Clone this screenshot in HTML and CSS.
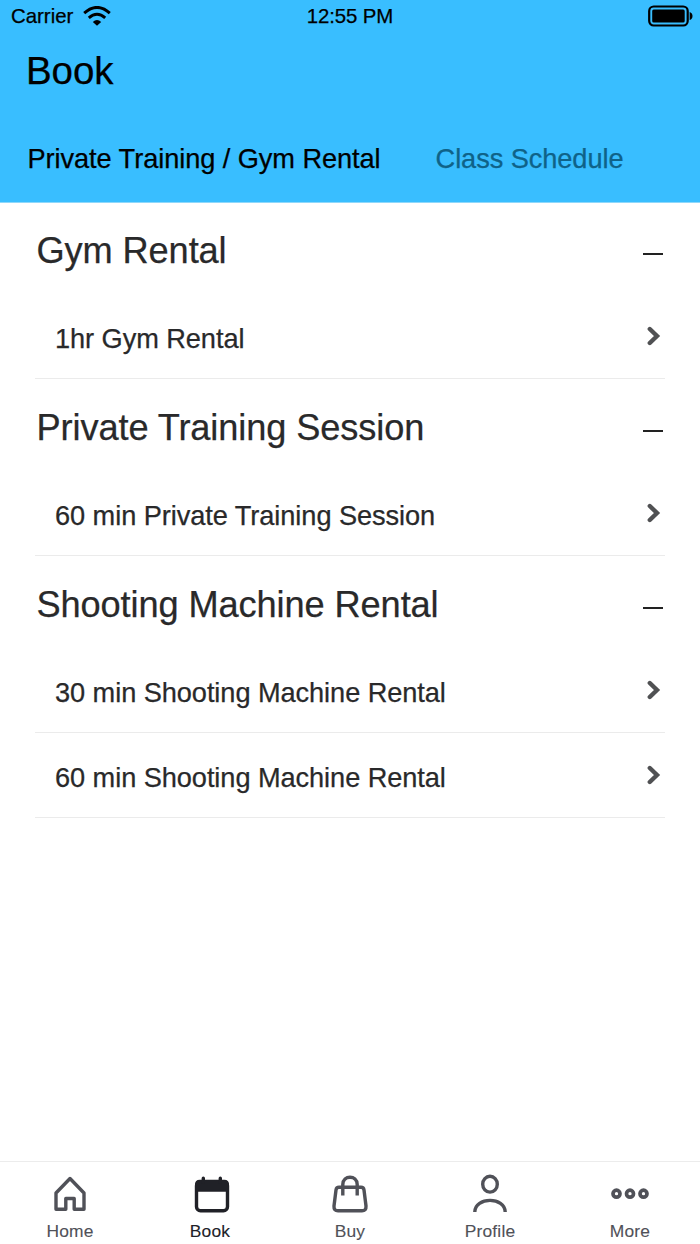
FILE: index.html
```html
<!DOCTYPE html>
<html lang="en">
<head>
<meta charset="utf-8">
<title>Book</title>
<link rel="stylesheet" href="styles.css">
</head>
<body>
<div class="app">
  <header class="header">
    <div class="status">
      <div class="carrier"><span>Carrier</span>
        <svg class="wifi" width="28" height="20" viewBox="0 0 28 20" fill="none" stroke="#000" stroke-width="3"><path d="M1.2 7.1Q14-4.2 26.8 7.1"/><path d="M5.8 11.8Q14 4.7 22.2 11.8"/><path d="M9.8 16Q14 12 18.2 16L14 19.8Z" fill="#000" stroke="none"/></svg>
      </div>
      <span class="time">12:55 PM</span>
      <svg class="battery" width="46" height="22" viewBox="0 0 46 22"><rect x="2.2" y="1.5" width="38.5" height="19" rx="4.5" fill="none" stroke="#000" stroke-width="2.2"/><rect x="5.2" y="4.5" width="32.5" height="13" rx="1.5"/><path d="M42.7 7Q45.5 8 45.5 11T42.7 15Z"/></svg>
    </div>
    <h1 class="title">Book</h1>
    <nav class="tabs"><a class="tab active">Private Training / Gym Rental</a><a class="tab">Class Schedule</a></nav>
  </header>
  <main class="content">
    <section>
      <h2 class="group"><span>Gym Rental</span><i class="minus"></i></h2>
      <div class="row"><span>1hr Gym Rental</span><svg class="chevron" viewBox="0 0 14 20"><path d="M2.8 3 10 10 2.8 17"/></svg></div>
    </section>
    <section>
      <h2 class="group"><span>Private Training Session</span><i class="minus"></i></h2>
      <div class="row"><span>60 min Private Training Session</span><svg class="chevron" viewBox="0 0 14 20"><path d="M2.8 3 10 10 2.8 17"/></svg></div>
    </section>
    <section>
      <h2 class="group"><span>Shooting Machine Rental</span><i class="minus"></i></h2>
      <div class="row"><span>30 min Shooting Machine Rental</span><svg class="chevron" viewBox="0 0 14 20"><path d="M2.8 3 10 10 2.8 17"/></svg></div>
      <div class="row"><span>60 min Shooting Machine Rental</span><svg class="chevron" viewBox="0 0 14 20"><path d="M2.8 3 10 10 2.8 17"/></svg></div>
    </section>
  </main>
  <footer class="tabbar">
    <a class="item"><svg class="icon" viewBox="0 0 44 44"><path d="M22 6.5 36 21V37.3H26.2V26.5H17.8V37.3H8V21Z"/></svg><span>Home</span></a>
    <a class="item selected"><svg class="icon" viewBox="0 0 44 44"><rect x="8.5" y="9.8" width="31" height="29" rx="4"/><path class="solid" d="M7 19.800V12.500Q7 7.800 11.7 7.800H36.3Q41 7.800 41 12.500V19.800Z"/><path d="M15.3 6.2V10M32.3 6.2V10" stroke-linecap="round"/></svg><span>Book</span></a>
    <a class="item"><svg class="icon" viewBox="0 0 44 44"><path d="M11 15.3H33Q35.6 15.3 36 18L38 34Q38.3 38.7 34 38.7H10Q5.7 38.7 6 34L8 18Q8.400 15.3 11 15.3Z"/><path d="M14.8 23.5V12.5C14.8 2.8 29.2 2.8 29.2 12.5V23.5"/></svg><span>Buy</span></a>
    <a class="item"><svg class="icon" viewBox="0 0 44 44"><ellipse cx="22" cy="12.2" rx="7.3" ry="7.900"/><path d="M6.800 40C6.800 24.500 37.200 24.500 37.200 40"/></svg><span>Profile</span></a>
    <a class="item"><svg class="icon" viewBox="0 0 44 44"><g stroke-width="3.7"><circle cx="8.5" cy="21.7" r="3.5"/><circle cx="22" cy="21.7" r="3.5"/><circle cx="35.5" cy="21.7" r="3.5"/></g></svg><span>More</span></a>
  </footer>
</div>
</body>
</html>
```
FILE: styles.css
```css
* { box-sizing: border-box; }
body { margin: 0; background: #fff; font-family: "Liberation Sans", Arial, sans-serif; -webkit-text-stroke: .25px currentColor; }
.app { width: 700px; height: 1244px; display: flex; flex-direction: column; }
.header { height: 203px; background: #39beff; color: #000; border-bottom: 1px solid #8fd8fb; }
.status { height: 32px; padding: 0 7px 0 11px; display: grid; grid-template-columns: 1fr auto 1fr; align-items: center; font-size: 20.4px; line-height: 32px; }
.carrier { display: flex; align-items: center; gap: 10px; }
.time { margin-left: -4px; letter-spacing: -.1px; }
.battery { justify-self: end; }
.title { margin: 16px 0 0 26px; font-size: 38.5px; line-height: 46px; font-weight: 400; letter-spacing: -.1px; }
.tabs { display: flex; gap: 55px; margin: 49px 0 0 27.5px; font-size: 27.2px; line-height: 32px; letter-spacing: -.07px; white-space: nowrap; }
.tab { color: #0f6288; }
.tab.active { color: #000; }
.content { flex: 1; padding: 0 35px; color: #29292a; }
.group { height: 91px; margin: 0; padding: 4px 2px 0 1.5px; display: flex; align-items: center; justify-content: space-between; font-size: 36.2px; font-weight: 400; letter-spacing: -.1px; }
.minus { width: 20px; height: 2px; margin-top: 6px; background: #222; }
.row { height: 85px; padding: 6px 4px 0 20px; display: flex; align-items: center; justify-content: space-between; font-size: 27.2px; letter-spacing: -.07px; border-bottom: 1px solid #ebebeb; }
section + section { padding-top: 1px; }
.chevron { width: 14px; height: 20px; margin-top: -6px; fill: none; stroke: #505153; stroke-width: 4.4; stroke-linecap: round; stroke-linejoin: miter; }
.tabbar { height: 83px; padding-top: 10px; display: grid; grid-template-columns: repeat(5, 1fr); border-top: 1px solid #ececec; }
.item { display: flex; flex-direction: column; align-items: center; color: #505158; font-size: 17.4px; line-height: 20px; letter-spacing: .2px; gap: 5px; -webkit-text-stroke-width: .1px; }
.icon { width: 44px; height: 44px; fill: none; stroke: currentColor; stroke-width: 3.4; stroke-linejoin: round; }
.selected { color: #202127; }
.solid { fill: currentColor; stroke: none; }
```
